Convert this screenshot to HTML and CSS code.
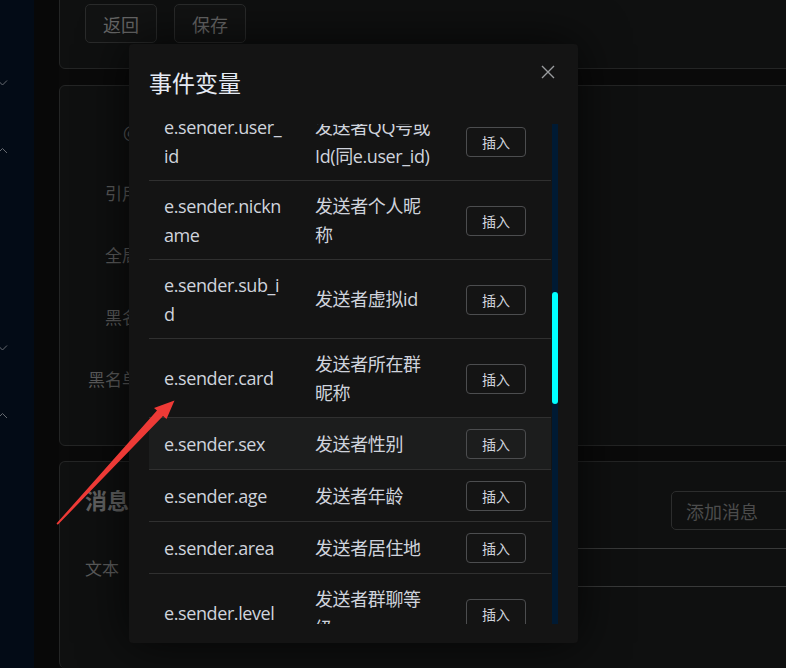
FILE: index.html
```html
<!DOCTYPE html>
<html lang="zh-CN">
  <head>
    <meta charset="UTF-8" />
    <meta name="viewport" content="width=device-width, initial-scale=1.0" />
    <title>事件变量</title>
    <link rel="stylesheet" href="styles.css">
  </head>
  <body>
    <div class="layout">
      <aside class="sidebar">
        <svg class="menu-arrow arrow-1" width="10" height="8" viewBox="0 0 10 8"><polyline points="-2,1.5 2.5,6 7,1.5" /></svg>
        <svg class="menu-arrow arrow-2" width="10" height="8" viewBox="0 0 10 8"><polyline points="-2,6 2.5,1.5 7,6" /></svg>
        <svg class="menu-arrow arrow-3" width="10" height="8" viewBox="0 0 10 8"><polyline points="-2,1.5 2.5,6 7,1.5" /></svg>
        <svg class="menu-arrow arrow-4" width="10" height="8" viewBox="0 0 10 8"><polyline points="-2,6 2.5,1.5 7,6" /></svg>
      </aside>
      <div class="gutter"></div>

      <main class="main">
        <section class="card card-actions">
          <button type="button" class="page-button">返回</button>
          <button type="button" class="page-button">保存</button>
        </section>

        <section class="card card-form">
          <div class="form-row"><label class="form-label">@某人</label></div>
          <div class="form-row"><label class="form-label">引用回复</label></div>
          <div class="form-row"><label class="form-label">全局生效</label></div>
          <div class="form-row"><label class="form-label">黑名单组</label></div>
          <div class="form-row"><label class="form-label">黑名单用户</label></div>
        </section>

        <section class="card card-message">
          <div class="message-head">
            <h2 class="message-title">消息</h2>
            <button type="button" class="page-button add-button">添加消息</button>
          </div>
          <div class="message-row">
            <span class="form-label-plain">文本</span>
            <div class="message-input"></div>
          </div>
        </section>
      </main>
    </div>

    <div class="dialog">
      <div class="dialog-header">
        <span class="dialog-title">事件变量</span>
        <svg class="dialog-close" width="14" height="14" viewBox="0 0 14 14">
          <path d="M1 1 L13 13 M13 1 L1 13" />
        </svg>
      </div>
      <div class="dialog-body">
        <div class="var-table">
          <div class="var-row">
            <div class="var-cell">e.sender.user_id</div>
            <div class="var-cell">发送者QQ号或Id(同e.user_id)</div>
            <div class="var-cell"><button type="button" class="insert-button">插入</button></div>
          </div>
          <div class="var-row">
            <div class="var-cell">e.sender.nickname</div>
            <div class="var-cell">发送者个人昵称</div>
            <div class="var-cell"><button type="button" class="insert-button">插入</button></div>
          </div>
          <div class="var-row">
            <div class="var-cell">e.sender.sub_id</div>
            <div class="var-cell">发送者虚拟id</div>
            <div class="var-cell"><button type="button" class="insert-button">插入</button></div>
          </div>
          <div class="var-row">
            <div class="var-cell">e.sender.card</div>
            <div class="var-cell">发送者所在群昵称</div>
            <div class="var-cell"><button type="button" class="insert-button">插入</button></div>
          </div>
          <div class="var-row is-hover">
            <div class="var-cell">e.sender.sex</div>
            <div class="var-cell">发送者性别</div>
            <div class="var-cell"><button type="button" class="insert-button">插入</button></div>
          </div>
          <div class="var-row">
            <div class="var-cell">e.sender.age</div>
            <div class="var-cell">发送者年龄</div>
            <div class="var-cell"><button type="button" class="insert-button">插入</button></div>
          </div>
          <div class="var-row">
            <div class="var-cell">e.sender.area</div>
            <div class="var-cell">发送者居住地</div>
            <div class="var-cell"><button type="button" class="insert-button">插入</button></div>
          </div>
          <div class="var-row">
            <div class="var-cell">e.sender.level</div>
            <div class="var-cell">发送者群聊等级</div>
            <div class="var-cell"><button type="button" class="insert-button">插入</button></div>
          </div>
        </div>
        <div class="scroll-track">
          <div class="scroll-thumb"></div>
        </div>
      </div>
    </div>

    <svg class="annotation" width="786" height="668" viewBox="0 0 786 668">
      <polygon points="56.5,523.5 157,410.5 154,408 174.5,400.5 166.5,419 163,416 57.8,524.8" />
    </svg>
  </body>
</html>
```

FILE: styles.css
```css
body {
  margin: 0;
  background-color: #0a0a0a;
  font-family: "Open Sans", "Noto Sans CJK SC", sans-serif;
  overflow: hidden;
  height: 668px;
}
.layout {
  display: flex;
  height: 668px;
}
.sidebar {
  width: 34px;
  flex-shrink: 0;
  background-color: #030b16;
  display: flex;
  flex-direction: column;
}
.menu-arrow {
  display: block;
  fill: none;
  stroke: #666a70;
  stroke-width: 1;
}
.arrow-1 {
  margin-top: 79px;
}
.arrow-2 {
  margin-top: 60px;
}
.arrow-3 {
  margin-top: 189px;
}
.arrow-4 {
  margin-top: 60px;
}
.gutter {
  width: 25px;
  flex-shrink: 0;
  background-color: #080808;
}
.main {
  width: 770px;
  flex-shrink: 0;
  display: flex;
  flex-direction: column;
}
.card {
  background-color: #0f1010;
  border: 1px solid #242525;
  border-radius: 6px;
}
.card-actions {
  margin-top: -20px;
  padding: 23px 25px 25px;
  display: flex;
  gap: 17px;
}
.page-button {
  height: 39px;
  padding: 0 17px;
  background-color: #121313;
  border: 1px solid #2a2b2b;
  border-radius: 5px;
  color: #676767;
  font-family: "Noto Sans CJK SC", sans-serif;
  font-size: 18px;
}
.card-form {
  margin-top: 16px;
  height: 361px;
  box-sizing: border-box;
  padding: 24px 25px 0;
  display: flex;
  flex-direction: column;
  gap: 22px;
}
.form-row {
  height: 40px;
  display: flex;
  align-items: center;
}
.form-label {
  width: 88px;
  text-align: right;
  white-space: nowrap;
  color: #5c5c5c;
  font-family: "Noto Sans CJK SC", sans-serif;
  font-size: 17px;
}
.card-message {
  margin-top: 15px;
  flex: 1;
  padding: 25px 25px 0;
  border-bottom: none;
}
.message-head {
  display: flex;
  justify-content: space-between;
  align-items: flex-start;
}
.message-title {
  margin: 0;
  font-family: "Noto Sans CJK SC", sans-serif;
  font-size: 22px;
  line-height: 24px;
  font-weight: 700;
  color: #626262;
}
.add-button {
  margin-top: 4px;
  min-width: 132px;
  text-align: left;
  padding: 0 14px;
  color: #4c4c4c;
  background-color: #0f1010;
  border-color: #2c2d2d;
}
.message-row {
  margin-top: 18px;
  display: flex;
  align-items: center;
}
.form-label-plain {
  width: 60px;
  color: #5c5c5c;
  font-family: "Noto Sans CJK SC", sans-serif;
  font-size: 17px;
}
.message-input {
  flex: 1;
  height: 37px;
  border: 1px solid #393a3a;
  border-right: none;
}
.dialog {
  position: absolute;
  left: 129px;
  top: 44px;
  width: 449px;
  height: 599px;
  background-color: #141414;
  border-radius: 4px;
  box-shadow: 0 0 50px rgba(0, 0, 0, 0.75);
  display: flex;
  flex-direction: column;
}
.dialog-header {
  position: relative;
  height: 80px;
  padding: 25px 20px 0;
  box-sizing: border-box;
}
.dialog-title {
  font-family: "Noto Sans CJK SC", sans-serif;
  font-size: 23px;
  line-height: 26px;
  color: #e5eaf3;
}
.dialog-close {
  position: absolute;
  top: 21px;
  right: 23px;
  fill: none;
  stroke: #9a9c9f;
  stroke-width: 1.4;
}
.dialog-body {
  position: relative;
  margin-left: 20px;
  width: 409px;
  height: 500px;
  overflow: hidden;
}
.var-table {
  width: 402px;
  margin-top: -22px;
}
.var-row {
  display: grid;
  grid-template-columns: 151px 151px 100px;
  border-bottom: 1px solid #303030;
}
.var-row.is-hover {
  background-color: #1c1d1d;
}
.var-cell {
  display: flex;
  align-items: center;
  padding: 11px 17px 10px 15px;
  color: #cfd3dc;
  font-size: 18px;
  line-height: 28.5px;
  letter-spacing: -0.4px;
  word-break: break-all;
}
.insert-button {
  width: 60px;
  height: 30px;
  padding: 0;
  background-color: transparent;
  border: 1px solid #4c4d4f;
  border-radius: 4px;
  color: #cfd3dc;
  font-family: "Noto Sans CJK SC", sans-serif;
  font-size: 14px;
}
.scroll-track {
  position: absolute;
  top: 0;
  right: 0;
  width: 6px;
  height: 500px;
  background-color: #001a33;
}
.scroll-thumb {
  position: absolute;
  top: 168px;
  left: 0;
  width: 6px;
  height: 112px;
  border-radius: 3px;
  background-color: #00ffff;
}
.annotation {
  position: absolute;
  left: 0;
  top: 0;
  pointer-events: none;
}
.annotation polygon {
  fill: #ee3a36;
}
```
